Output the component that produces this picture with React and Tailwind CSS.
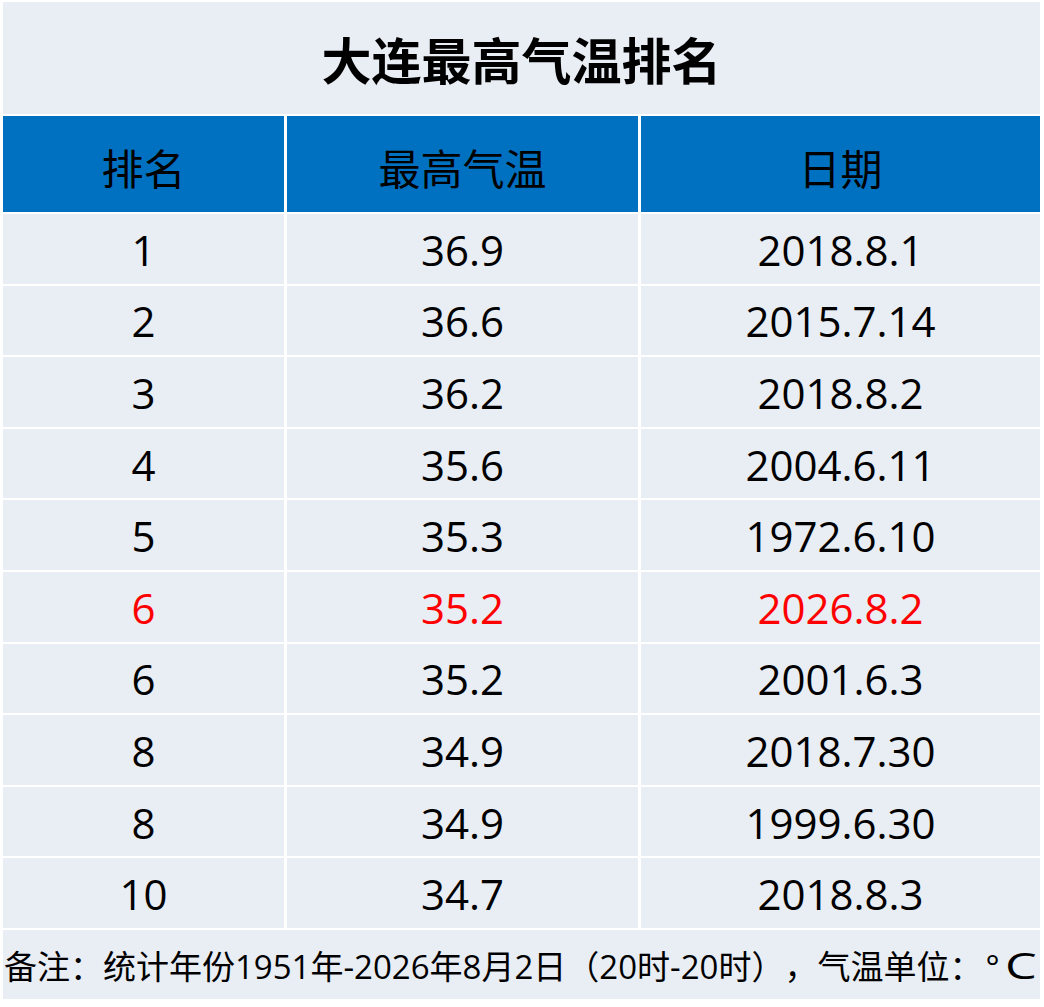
const rows = [
  { rank: '1', temp: '36.9', date: '2018.8.1' },
  { rank: '2', temp: '36.6', date: '2015.7.14' },
  { rank: '3', temp: '36.2', date: '2018.8.2' },
  { rank: '4', temp: '35.6', date: '2004.6.11' },
  { rank: '5', temp: '35.3', date: '1972.6.10' },
  { rank: '6', temp: '35.2', date: '2026.8.2', hot: true },
  { rank: '6', temp: '35.2', date: '2001.6.3' },
  { rank: '8', temp: '34.9', date: '2018.7.30' },
  { rank: '8', temp: '34.9', date: '1999.6.30' },
  { rank: '10', temp: '34.7', date: '2018.8.3' },
];

const cols = 'grid grid-cols-[281px_351px_399px] gap-x-[3px]';

export default function App() {
  return (
    <div className="w-[1044px] h-[1007px] bg-white pt-[2px] pl-[3px] font-['Open_Sans','Noto_Sans_CJK_SC',sans-serif] text-black">
      <div className="w-[1037px] flex flex-col gap-[2px]">
        {/* title */}
        <div className="h-[112px] bg-[#e9edf4] flex items-center justify-center">
          <h1 className="font-['Noto_Sans_CJK_SC',sans-serif] text-[50px] font-bold leading-none">大连最高气温排名</h1>
        </div>

        {/* header */}
        <div className={cols}>
          {['排名', '最高气温', '日期'].map(h => (
            <div
              key={h}
              className="h-[96px] bg-[#0070c0] flex items-center justify-center font-['Noto_Sans_CJK_SC',sans-serif] text-[42px] leading-none pt-[6px]"
            >
              {h}
            </div>
          ))}
        </div>

        {rows.map((r, i) => (
          <div key={i} className={cols}>
            {[r.rank, r.temp, r.date].map((v, j) => (
              <div
                key={j}
                className={`h-[69.6px] bg-[#e9edf4] flex items-center justify-center text-[42px] leading-none pt-[2px] ${r.hot ? 'text-[#ff0000]' : ''}`}
              >
                {v}
              </div>
            ))}
          </div>
        ))}

        {/* note */}
        <div className="h-[69px] bg-[#e9edf4] flex items-center pl-[1px] pt-[4px] text-[33px] leading-none whitespace-nowrap [text-spacing-trim:space-all]">
          <span>备注：统计年份1951年-2026年8月2日（20时-20时），气温单位：</span>
          <span className="ml-[3px]">°</span>
          <span className="inline-block ml-[5px] text-[36px] scale-x-[1.4] origin-left">C</span>
        </div>
      </div>
    </div>
  );
}
